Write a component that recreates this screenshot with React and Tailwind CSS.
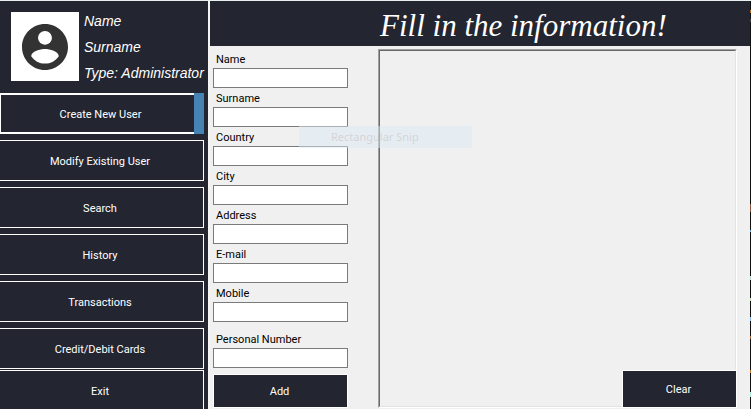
const navItems = ["Modify Existing User", "Search", "History", "Transactions", "Credit/Debit Cards"];
const fields = ["Name", "Surname", "Country", "City", "Address", "E-mail", "Mobile", "Personal Number"];

function NavButton({ children }) {
  return (
    <button className="h-[41px] w-[204px] shrink-0 border border-l-0 border-white pt-[2px] pr-[3px] text-center">
      {children}
    </button>
  );
}

function Sidebar() {
  return (
    <aside className="flex w-[208px] shrink-0 flex-col bg-[#232531] text-white">
      <div className="flex h-[92px] shrink-0 gap-[5px] pt-[11px] pl-[11px]">
        <div className="flex h-[69px] w-[68px] shrink-0 items-center justify-center bg-white">
          <svg viewBox="2 2 20 20" className="size-[46px]" fill="#333333" aria-label="User">
            <path d="M12 2C6.480 2 2 6.480 2 12s4.480 10 10 10 10-4.480 10-10S17.520 2 12 2zm0 3c1.660 0 3 1.340 3 3s-1.340 3-3 3-3-1.340-3-3 1.340-3 3-3zm0 14.200c-2.500 0-4.710-1.280-6-3.220.030-1.990 4-3.080 6-3.080 1.990 0 5.970 1.090 6 3.080-1.290 1.940-3.500 3.220-6 3.220z" />
          </svg>
        </div>
        <div className="flex flex-col gap-2 font-['Liberation_Sans',sans-serif] text-[14px] leading-[18px] whitespace-nowrap italic">
          <p>Name</p>
          <p>Surname</p>
          <p>Type: Administrator</p>
        </div>
      </div>
      <nav className="flex flex-col gap-[6px]">
        <button className="flex h-[41px] w-[204px] shrink-0">
          <span className="flex h-full flex-1 items-center justify-center border-y-2 border-l border-white pt-[2px] pl-[6px]">
            Create New User
          </span>
          <span className="h-full w-[10px] bg-[#4682b4]" />
        </button>
        {navItems.map((item) => (
          <NavButton key={item}>{item}</NavButton>
        ))}
      </nav>
      <div className="flex pt-px">
        <NavButton>Exit</NavButton>
      </div>
    </aside>
  );
}

function UserForm() {
  return (
    <form className="flex w-[135px] shrink-0 flex-col" onSubmit={(e) => e.preventDefault()}>
      {fields.map((name) => (
        <label key={name} className="flex flex-col last-of-type:mt-[7px]">
          <span className="h-[19px] pl-[3px] leading-[21px]">{name}</span>
          <input type="text" className="h-5 w-full border border-[#7a7a7a] bg-white px-1 outline-none" />
        </label>
      ))}
      <button type="submit" className="mt-[6px] h-[34px] border border-white bg-[#232531] pt-[2px] pr-[2px] text-white">
        Add
      </button>
    </form>
  );
}

export default function App() {
  return (
    <div className="relative flex h-screen overflow-hidden border-t border-[#e8f0f0] bg-[#f0f0f0] font-['Roboto','Liberation_Sans',sans-serif] text-[11px] leading-4 text-black">
      <Sidebar />
      <div className="w-[2px] shrink-0 bg-[#f4f4f4]" />
      <main className="flex min-w-0 flex-1 flex-col">
        <header className="h-[45px] shrink-0 bg-[#232531] pl-[170px]">
          <h1 className="font-['Liberation_Serif',serif] text-[31px] leading-[50px] whitespace-nowrap text-white italic">
            Fill in the information!
          </h1>
        </header>
        <div className="flex min-h-0 flex-1 gap-[30px] pt-[3px] pr-[13px] pb-px pl-[3px]">
          <UserForm />
          <section className="flex flex-1 border border-t-[#a0a0a0] border-r-white border-b-white border-l-[#a0a0a0]">
            <div className="flex flex-1 items-end justify-end border border-t-[#696969] border-r-[#e3e3e3] border-b-[#e3e3e3] border-l-[#696969]">
              <button className="-mr-px -mb-px h-[37px] w-[114px] border-t border-l border-white bg-[#232531] pt-[2px] pr-[2px] text-white">
                Clear
              </button>
            </div>
          </section>
        </div>
      </main>
      <div className="w-px shrink-0 bg-[linear-gradient(#111_9px,#b5682c_9px_12px,#111_12px_18px,#444_18px_21px,#111_21px_203px,#8a5540_203px_211px,#111_211px_229px,#7ab0dd_229px_231px,#111_231px_275px,#bcd8d0_275px_279px,#111_279px_297px,#c8dcc0_297px_300px,#111_300px_316px,#8fb9dd_316px_320px,#111_320px_335px,#a06040_335px_338px,#111_338px_369px,#c07830_369px_372px,#111_372px_391px,#b0ead8_391px_396px,#111_396px)]" />
      <div className="pointer-events-none absolute top-[125px] left-[299px] h-[22px] w-[173px] bg-[#dbeaf3]/50 pl-8 font-['Noto_Sans',sans-serif] leading-[22px] text-[#b9a9a9]/40">
        Rectangular Snip
      </div>
    </div>
  );
}
